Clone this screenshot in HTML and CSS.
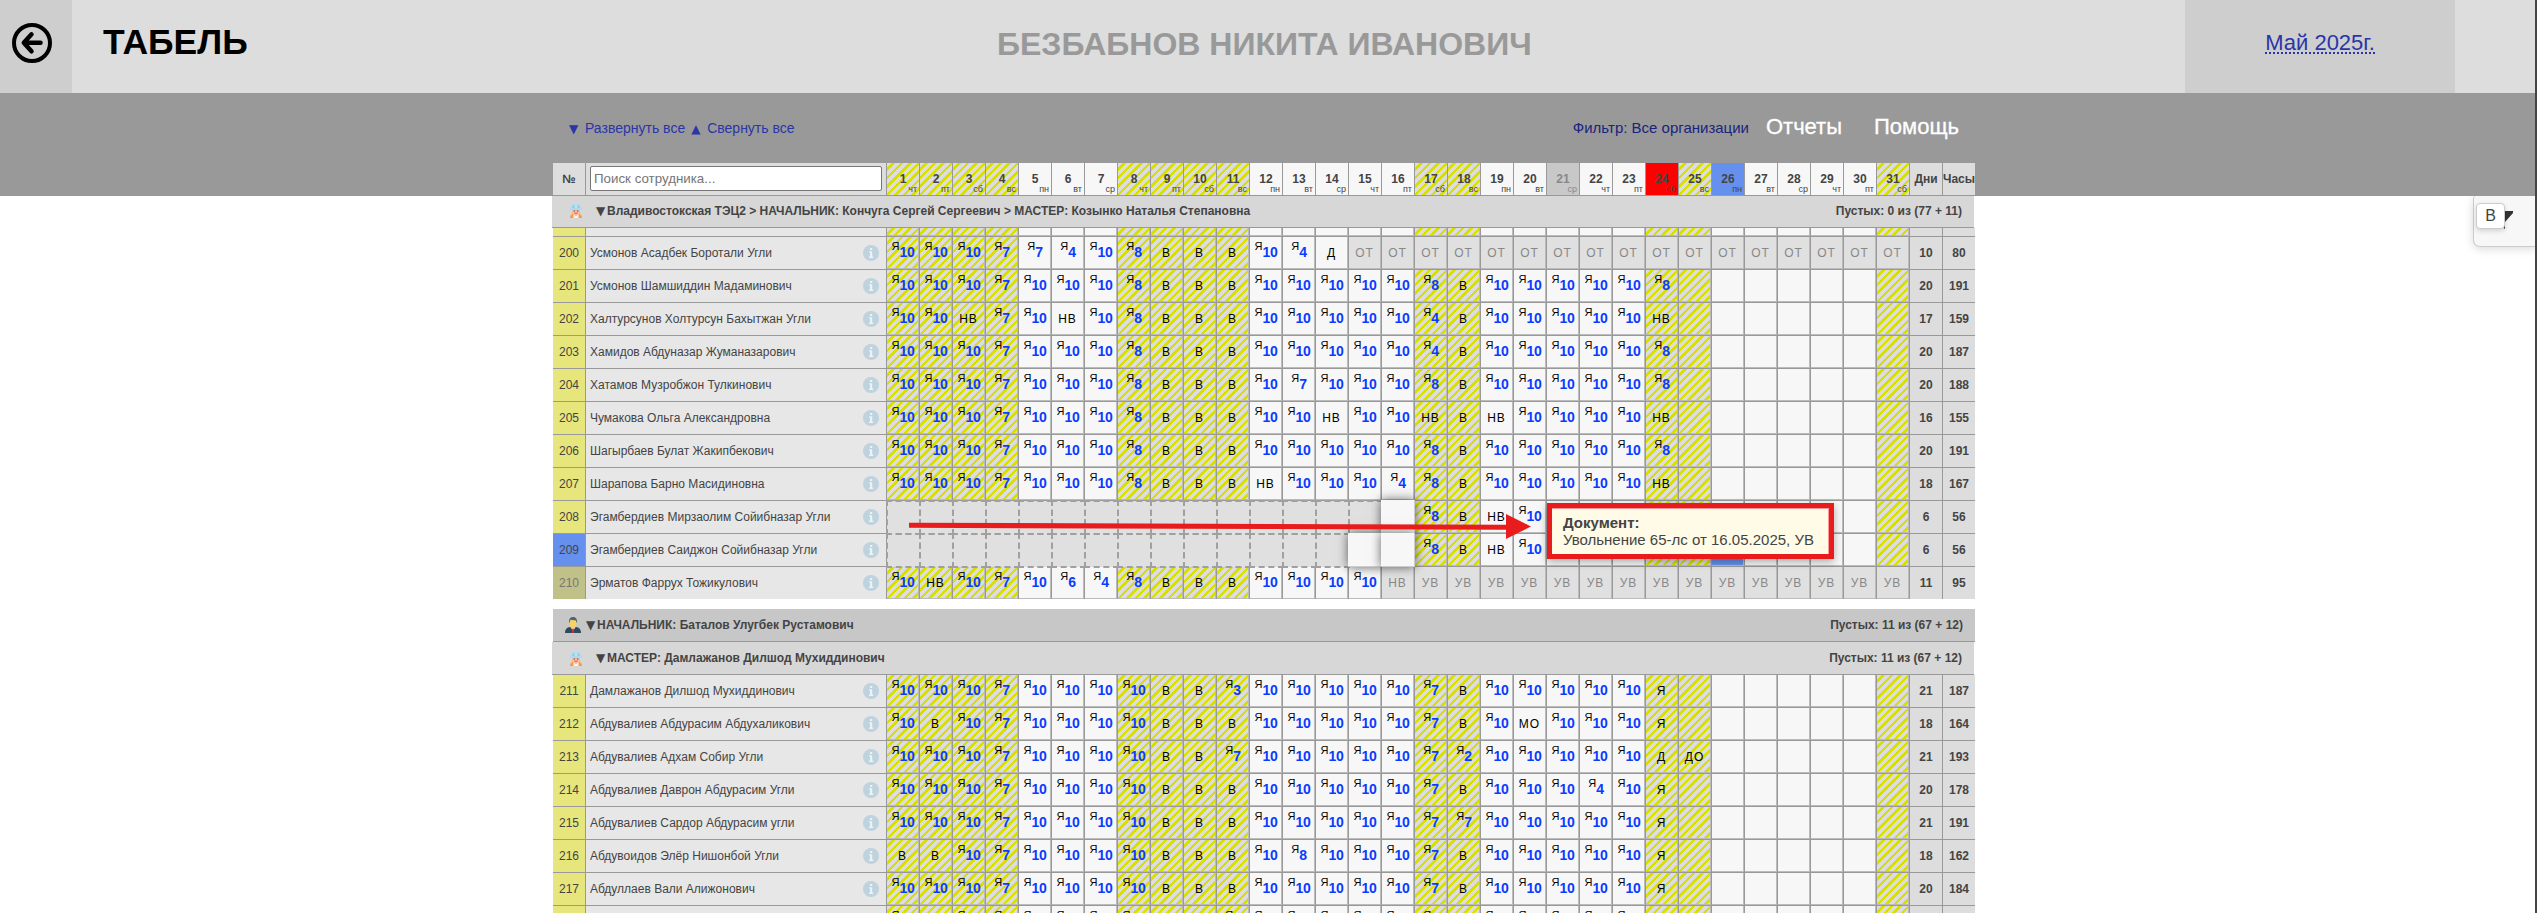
FILE: index.html
```html
<!DOCTYPE html>
<html lang="ru">
<head>
<meta charset="utf-8">
<title>Табель</title>
<link rel="stylesheet" href="styles.css">
</head>
<body>
<svg class="defs" width="0" height="0">
  <symbol id="worker" viewBox="0 0 14 15">
    <path d="M1 15c0-3 2-4.500 4-4.500h4c2 0 4 1.500 4 4.500z" fill="#ff9a3c"/>
    <path d="M4.500 10.500 7 13l2.500-2.500V15h-5z" fill="#e9f3f8"/>
    <path d="M3 6h8v2.500C11 10.800 9.500 12 7 12S3 10.800 3 8.500z" fill="#f9b9a4"/>
    <circle cx="5.300" cy="8" r=".8" fill="#7b5a50"/><circle cx="8.700" cy="8" r=".8" fill="#7b5a50"/>
    <path d="M5.500 10.200h3" stroke="#e0574d" stroke-width="1"/>
    <path d="M2.500 5.800C2.500 2.500 4.500 1 7 1s4.500 1.500 4.500 4.800z" fill="#8fd4f0"/>
    <path d="M6 0h2v5H6z" fill="#b9e6f8"/>
    <path d="M1 5.200h12v1.500H1z" fill="#a9dcf2"/>
  </symbol>
  <symbol id="boss" viewBox="0 0 16 16">
    <path d="M0 16c0-4 2-5.500 5-6h6c3 .5 5 2 5 6z" fill="#2f4a5c"/>
    <path d="M5.500 10 8 14l2.500-4z" fill="#f2f5f7"/>
    <path d="M7.300 11.500h1.400L9.200 16H6.800z" fill="#c8322f"/>
    <path d="M4.500 3h7v4c0 2.500-1.500 4.300-3.500 4.300S4.500 9.500 4.500 7z" fill="#fbd064"/>
    <path d="M4 5.500C3.800 1.800 5.500 0 8 0s4.300 1.500 4 5.500h-.7L11 3.500 5.500 2.800 4.700 5.500z" fill="#4c6478"/>
  </symbol>
  <symbol id="info" viewBox="0 0 16 16">
    <circle cx="8" cy="8" r="8" fill="#bed3de"/>
    <path d="M7 3h2.200v2H7zM6 6.200h3.200v5.300h1V13H6v-1.500h1V7.600H6z" fill="#edf2f5"/>
  </symbol>
</svg>

<div class="page">
  <header class="top">
    <a class="back" href="#">
      <svg width="40" height="40" viewBox="0 0 40 40" fill="none" stroke="#000" stroke-linecap="round" stroke-linejoin="round">
        <circle cx="20" cy="20" r="18" stroke-width="4"/>
        <path d="M28.500 19.800H13M19.500 11.300l-7.700 8.500 7.700 8.500" stroke-width="4.500"/>
      </svg>
    </a>
    <h1 class="title">ТАБЕЛЬ</h1>
    <div class="person">БЕЗБАБНОВ НИКИТА ИВАНОВИЧ</div>
    <div class="month"><a href="#">Май 2025г.</a></div>
    <div class="top-end"></div>
  </header>

  <div class="band">
    <nav class="menu">
      <a class="fold" href="#"><i>▼</i>Развернуть все</a>
      <a class="fold" href="#"><i>▲</i>Свернуть все</a>
      <a class="filter" href="#">Фильтр: Все организации</a>
      <a class="big" href="#">Отчеты</a>
      <a class="big" href="#">Помощь</a>
    </nav>
    <div class="row head" id="head"></div>
  </div>

  <main class="sheet">
    <div class="group nested first">
      <svg class="worker"><use href="#worker"/></svg>
      <b class="name"><i>▼</i>Владивостокская ТЭЦ2 &gt; НАЧАЛЬНИК: Кончуга Сергей Сергеевич &gt; МАСТЕР: Козынко Наталья Степановна</b>
      <b class="empty">Пустых: 0 из (77 + 11)</b>
    </div>
    <div id="team1"></div>
    <div class="group chief">
      <svg class="boss"><use href="#boss"/></svg>
      <b class="name"><i>▼</i>НАЧАЛЬНИК: Баталов Улугбек Рустамович</b>
      <b class="empty">Пустых: 11 из (67 + 12)</b>
    </div>
    <div class="group nested">
      <svg class="worker"><use href="#worker"/></svg>
      <b class="name"><i>▼</i>МАСТЕР: Дамлажанов Дилшод Мухиддинович</b>
      <b class="empty">Пустых: 11 из (67 + 12)</b>
    </div>
    <div id="team2"></div>
  </main>

  <svg class="arrow" width="624" height="28" viewBox="0 0 624 28">
    <path d="M0 8.700 597 10.700V0l25 12.500L597 25V15.800L0 13.800z" fill="#e81c1c"/>
  </svg>
  <div class="tooltip"><b>Документ:</b><br>Увольнение 65-лс от 16.05.2025, УВ</div>

  <aside class="side">
    <svg class="funnel" width="26" height="18" viewBox="0 0 26 18"><path d="M0 0h25v2l-8 9v7l-6-4v-3L0 2z" fill="#333"/></svg>
    <span class="key">В</span>
  </aside>
  <div class="edge"></div>
</div>
<script src="script.js"></script>
</body>
</html>
```
FILE: styles.css
```css
* { box-sizing: border-box; }
body { margin: 0; background: #fff; font-family: "Liberation Sans", Arial, sans-serif; font-size: 12px; color: #444; }
a { text-decoration: none; }
i { display: inline-block; font-family: "DejaVu Sans", sans-serif; font-style: normal; font-weight: normal; line-height: 1; }
.defs { position: absolute; }
.page { position: relative; width: 2537px; height: 913px; overflow: hidden; }

.top { display: flex; height: 93px; background: #ddd; }
.back { width: 72px; background: #cecece; padding: 23px 0 0 12px; }
.title { margin: 0; width: 648px; padding: 22px 0 0 31px; font-size: 35.500px; line-height: 41px; color: #000; }
.person { width: 1465px; padding: 26px 0 0 277px; font-size: 32px; line-height: 37px; font-weight: bold; color: #999; white-space: nowrap; }
.month { width: 270px; background: #cecece; text-align: center; padding-top: 30px; font-size: 22px; line-height: 25px; }
.month a { display: inline-block; height: 24px; color: #2a35a8; border-bottom: 2px dotted #2a35a8; }

.band { height: 103px; background: #999; padding-left: 553px; }
.menu { display: flex; align-items: flex-start; width: 1422px; height: 70px; padding: 21px 16px 0; font-size: 14px; line-height: 16px; white-space: nowrap; }
.fold { color: #2a35a8; margin: 6px 6px 0 0; }
.fold i { width: 16px; font-size: 12px; }
.filter { color: #1a237e; margin: 5px 0 0 auto; font-size: 15px; line-height: 17px; }
.big { color: #fff; font-size: 22px; line-height: 25px; margin: 0 0 0 17px; -webkit-text-stroke: .3px #fff; }
.big + .big { margin-left: 32px; }

.sheet { width: 1422px; margin-left: 553px; }
.row { display: grid; grid-template-columns: 33px 301px repeat(31, 33px) 33px 32px; width: 1422px; height: 33px; }
.row > div { border-right: 1px solid #999; border-bottom: 1px solid #999; overflow: hidden; }
.row > div:last-child { border-right: 0; }
.row .num { background: #e7e67c; text-align: center; line-height: 33px; }
.row .num.today { background: #6590ee; }
.row .num.fired { background: #c0c089; color: #777; }
.row .fio { display: flex; justify-content: space-between; align-items: center; background: #e7e7e7; padding: 0 7px 1px 4px; white-space: nowrap; }
.fio svg { width: 16px; height: 16px; }
.row .sum { background: #ddd; text-align: center; font-weight: bold; line-height: 33px; }

.row .day { background: #f7f7f7; box-shadow: inset -1px -1px #bbb; color: #000; text-align: center; line-height: 32px; letter-spacing: 1px; white-space: nowrap; padding-right: 1px; }
.row .day.hours { padding: 0; letter-spacing: 0; }
.row .day.rest, .head .date.rest { background: repeating-linear-gradient(135deg, #ddd 0, #ddd 3.500px, #d9df00 3.500px, #d9df00 6px); }
.row .day.muted { background: #e0e0e0; color: #888; }
.row .day.blue { background: #6590ee; }
.day sup { font-size: 11px; line-height: 0; vertical-align: 7px; }
.day b { font-size: 14px; line-height: 0; color: #0a3cff; letter-spacing: -.3px; }
.row .off { background: #e0e0e0; box-shadow: none; position: relative; overflow: visible; border-color: transparent; }
.off::after { content: ""; position: absolute; z-index: 1; inset: -1px -2px -2px -1px; border: 2px dashed #a0a0a0; }
.row .raised { position: relative; z-index: 2; margin: -1px 0 0 -1px; width: 34px; height: 34px; border-color: #ccc; box-shadow: 0 0 10px rgba(0, 0, 0, .6); }

.head > div { background: #ddd; text-align: center; font-weight: bold; line-height: 32px; }
.head .date { position: relative; background: #f7f7f7; }
.head .date small { position: absolute; right: 2px; bottom: 1px; font-size: 9px; line-height: 10px; font-weight: normal; }
.head .date.past { background: #c8c8c8; color: #888; }
.head .date.alert { background: #f00; }
.head .date.today { background: #6590ee; }
.head > div:nth-child(2) { padding: 3px 4px 0; line-height: 0; }
.search { width: 292px; height: 25px; border: 1px solid #767676; border-radius: 2px; padding: 0 3px; font: 13.333px "Liberation Sans", Arial, sans-serif; }
.search::placeholder { color: #757575; }

.row.cut { height: 9px; }
.row.last { height: 32px; }
.row.last > div { border-bottom: 0; }

.group { display: flex; align-items: center; height: 33px; border-bottom: 1px solid #999; background: #d7d7d7; }
.nested { width: 1422px; margin-left: -1px; padding: 0 12px 0 17px; }
.nested.first { height: 32px; padding-bottom: 2px; }
.chief { background: #c7c7c7; margin-top: 10px; padding: 0 12px 0 12px; }
.group i { width: 11px; }
.worker { width: 14px; height: 15px; margin-right: 13px; }
.boss { width: 16px; height: 16px; margin-right: 5px; }
.empty { margin-left: auto; }

.arrow { position: absolute; left: 909px; top: 514px; z-index: 4; }
.tooltip { position: absolute; z-index: 3; left: 1547px; top: 503px; width: 287px; height: 56px; border: 5px solid #e81c1c; background: #fffbe6; padding: 6px 0 0 11px; font-size: 15px; line-height: 17px; white-space: nowrap; box-shadow: inset -1px 1px #f99, 0 3px 8px rgba(0, 0, 0, .3); }

.side { position: absolute; left: 2473px; top: 196px; width: 64px; height: 51px; background: #f7f7f7; border: 1px solid #ccc; border-top: 0; border-radius: 3px 0 0 7px; box-shadow: 0 2px 10px rgba(0, 0, 0, .15); clip-path: inset(0 0 -20px -20px); }
.funnel { position: absolute; left: 14px; top: 15px; }
.key { position: absolute; left: 2px; top: 7px; width: 29px; height: 26px; border: 1px solid #ccc; border-radius: 4px; background: #fff; text-align: center; font-size: 16px; line-height: 24px; box-shadow: 0 2px 5px rgba(0, 0, 0, .15); }
.edge { position: absolute; right: 0; top: 0; width: 2px; height: 100%; background: #444; }
```
FILE: script.js
```js
const REST = new Set([1, 2, 3, 4, 8, 9, 10, 11, 17, 18, 24, 25, 31]);
const WEEK = ['вс', 'пн', 'вт', 'ср', 'чт', 'пт', 'сб'];

// Codes: number = hours worked, "-" = not employed, "+" = highlighted, "~X" = locked by a document,
// "." = empty, "*N" repeats the code before it.
const team1 = [
  [200, 'Усмонов Асадбек Боротали Угли', '10*3 7 7 4 10 8 В*3 10 4 Д ~ОТ*17', 10, 80],
  [201, 'Усмонов Шамшиддин Мадаминович', '10*3 7 10*3 8 В*3 10*5 8 В 10*5 8', 20, 191],
  [202, 'Халтурсунов Холтурсун Бахытжан Угли', '10*2 НВ 7 10 НВ 10 8 В*3 10*5 4 В 10*5 НВ', 17, 159],
  [203, 'Хамидов Абдуназар Жуманазарович', '10*3 7 10*3 8 В*3 10*5 4 В 10*5 8', 20, 187],
  [204, 'Хатамов Музробжон Тулкинович', '10*3 7 10*3 8 В*3 10 7 10*3 8 В 10*5 8', 20, 188],
  [205, 'Чумакова Ольга Александровна', '10*3 7 10*3 8 В*3 10*2 НВ 10*2 НВ В НВ 10*4 НВ', 16, 155],
  [206, 'Шагырбаев Булат Жакипбекович', '10*3 7 10*3 8 В*3 10*5 8 В 10*5 8', 20, 191],
  [207, 'Шарапова Барно Масидиновна', '10*3 7 10*3 8 В*3 НВ 10*3 4 8 В 10*5 НВ', 18, 167],
  [208, 'Эгамбердиев Мирзаолим Сойибназар Угли', '-*15 + 8 В НВ 10', 6, 56],
  [209, 'Эгамбердиев Саиджон Сойибназар Угли', '-*14 +*2 8 В НВ 10', 6, 56],
  [210, 'Эрматов Фаррух Тожикулович', '10 НВ 10 7 10 6 4 8 В*3 10*4 ~НВ ~УВ*15', 11, 95],
];
const team2 = [
  [211, 'Дамлажанов Дилшод Мухиддинович', '10*3 7 10*4 В*2 3 10*5 7 В 10*5 Я', 21, 187],
  [212, 'Абдувалиев Абдурасим Абдухаликович', '10 В 10 7 10*4 В*3 10*5 7 В 10 МО 10*3 Я', 18, 164],
  [213, 'Абдувалиев Адхам Собир Угли', '10*3 7 10*4 В*2 7 10*5 7 2 10*5 Д ДО', 21, 193],
  [214, 'Абдувалиев Даврон Абдурасим Угли', '10*3 7 10*4 В*3 10*5 7 В 10*3 4 10 Я', 20, 178],
  [215, 'Абдувалиев Сардор Абдурасим угли', '10*3 7 10*4 В*3 10*5 7 7 10*5 Я', 21, 191],
  [216, 'Абдувоидов Элёр Нишонбой Угли', 'В*2 10 7 10*4 В*3 10 8 10*3 7 В 10*5 Я', 18, 162],
  [217, 'Абдуллаев Вали Алижонович', '10*3 7 10*4 В*3 10*5 7 В 10*5 Я', 20, 184],
  [218, '', '10 В 10 7 10*4 В*2 7 10*5 7 В 10*5 Я', '', ''],
];

function expand(codes) {
  const out = codes.split(' ').flatMap((c) => {
    const [code, n] = c.split('*');
    return Array(Number(n || 1)).fill(code);
  });
  while (out.length < 31) out.push('.');
  return out;
}

function dayCell(code, day, no) {
  let cls = 'day', text = '';
  if (code === '-') cls += ' off';
  else if (code === '+') cls += ' raised';
  else if (code[0] === '~') { cls += ' muted'; text = code.slice(1); }
  else {
    if (REST.has(day)) cls += ' rest';
    if (no === 209 && day === 26) cls += ' blue';
    if (/^\d/.test(code)) { cls += ' hours'; text = `<sup>Я</sup><b>${code}</b>`; }
    else if (code !== '.') text = code;
  }
  return `<div class="${cls}">${text}</div>`;
}

function row([no, name, codes, days, hours], extra = '') {
  const mark = no === 209 ? ' today' : no === 210 ? ' fired' : '';
  const icon = name ? '<svg><use href="#info"/></svg>' : '';
  return `<div class="row${extra}"><div class="num${mark}">${name ? no : ''}</div>` +
    `<div class="fio"><span>${name}</span>${icon}</div>` +
    expand(codes).map((c, i) => dayCell(c, i + 1, no)).join('') +
    `<div class="sum">${days}</div><div class="sum">${hours}</div></div>`;
}

let head = '<div>№</div><div><input class="search" placeholder="Поиск сотрудника..."></div>';
for (let d = 1; d <= 31; d++) {
  const kind = d === 21 ? 'past' : d === 24 ? 'alert' : d === 26 ? 'today' : REST.has(d) ? 'rest' : '';
  head += `<div class="date ${kind}">${d}<small>${WEEK[(d + 3) % 7]}</small></div>`;
}
document.getElementById('head').innerHTML = head + '<div>Дни</div><div>Часы</div>';
document.getElementById('team1').innerHTML =
  row([199, '', '.', '', ''], ' cut') + team1.map((r) => row(r, r[0] === 210 ? ' last' : '')).join('');
document.getElementById('team2').innerHTML = team2.map((r) => row(r)).join('');
```
